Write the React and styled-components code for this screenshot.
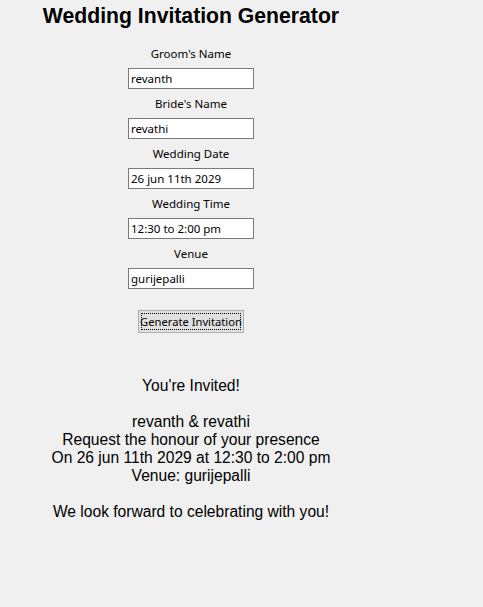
import React, { useState } from 'react';
import styled, { createGlobalStyle } from 'styled-components';

const GlobalStyle = createGlobalStyle`
    html, body {
        margin: 0;
        padding: 0;
        background: #f0f0f0;
    }
`;

const Window = styled.div`
    width: 382px;
    min-height: 607px;
    display: flex;
    flex-direction: column;
    align-items: center;
    font-family: 'Noto Sans', 'Open Sans', sans-serif;
`;

const Title = styled.h1`
    margin: 4px 0 0 0;
    height: 42px;
    font-family: 'Liberation Sans', Arial, sans-serif;
    font-size: 21.2px;
    line-height: 24px;
    font-weight: bold;
    color: #000;
    white-space: nowrap;
`;

const Field = styled.div`
    display: flex;
    flex-direction: column;
    align-items: center;
    margin-top: ${(p) => (p.first ? '0' : '7px')};
`;

const Label = styled.label`
    height: 18px;
    line-height: 15px;
    font-size: 11.5px;
    color: #000;
    margin-bottom: 4px;
    white-space: nowrap;
`;

const Input = styled.input`
    box-sizing: border-box;
    width: 126px;
    height: 21px;
    margin: 0;
    padding: 0 2px;
    border: 1px solid #7a7a7a;
    background: #fff;
    font-family: 'Noto Sans', 'Open Sans', sans-serif;
    font-size: 11.5px;
    color: #000;
    outline: none;
`;

const Button = styled.button`
    box-sizing: border-box;
    margin-top: 21px;
    width: 106px;
    height: 23px;
    padding: 0;
    border: 1px solid #adadad;
    background: #e1e1e1;
    font-family: 'Noto Sans', 'Open Sans', sans-serif;
    font-size: 11.2px;
    line-height: 19px;
    color: #000;
    white-space: nowrap;
    position: relative;
    cursor: pointer;
    &::after {
        content: '';
        position: absolute;
        inset: 2px;
        border: 1px dotted #000;
    }
`;

const Invitation = styled.div`
    margin-top: 44px;
    font-family: 'Liberation Sans', Arial, sans-serif;
    font-size: 15.6px;
    line-height: 18px;
    color: #000;
    text-align: center;
    white-space: pre;
`;

const fields = [
    { key: 'groom', label: "Groom's Name" },
    { key: 'bride', label: "Bride's Name" },
    { key: 'date', label: 'Wedding Date' },
    { key: 'time', label: 'Wedding Time' },
    { key: 'venue', label: 'Venue' },
];

const makeText = (v) =>
    `You're Invited!\n\n${v.groom} & ${v.bride}\nRequest the honour of your presence\nOn ${v.date} at ${v.time}\nVenue: ${v.venue}\n\nWe look forward to celebrating with you!`;

const App = () => {
    const [values, setValues] = useState({
        groom: 'revanth',
        bride: 'revathi',
        date: '26 jun 11th 2029',
        time: '12:30 to 2:00 pm',
        venue: 'gurijepalli',
    });
    const [text, setText] = useState(makeText(values));

    return (
        <Window>
            <GlobalStyle />
            <Title>Wedding Invitation Generator</Title>
            {fields.map((f, i) => (
                <Field key={f.key} first={i === 0}>
                    <Label>{f.label}</Label>
                    <Input
                        value={values[f.key]}
                        onChange={(e) => setValues({ ...values, [f.key]: e.target.value })}
                    />
                </Field>
            ))}
            <Button onClick={() => setText(makeText(values))}>Generate Invitation</Button>
            <Invitation>{text}</Invitation>
        </Window>
    );
};

export default App;
